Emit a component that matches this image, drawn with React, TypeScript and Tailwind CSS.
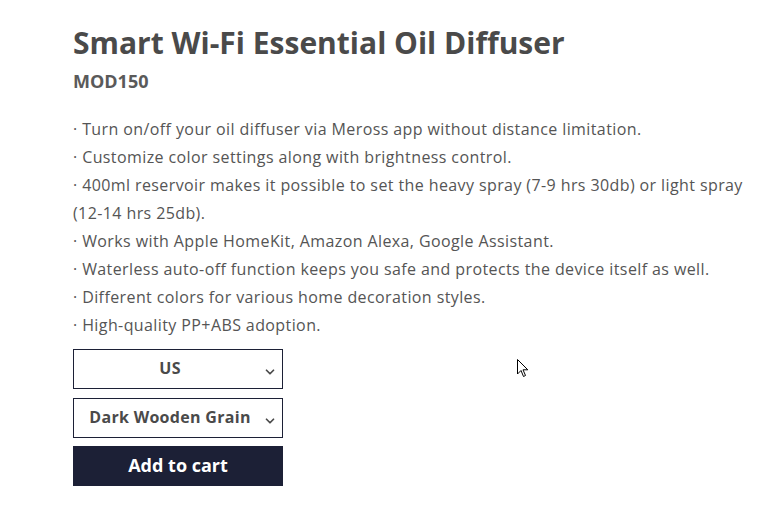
import { ChevronDown } from "lucide-react";

const features = [
  "Turn on/off your oil diffuser via Meross app without distance limitation.",
  "Customize color settings along with brightness control.",
  "400ml reservoir makes it possible to set the heavy spray (7-9 hrs 30db) or light spray",
  "(12-14 hrs 25db).",
  "Works with Apple HomeKit, Amazon Alexa, Google Assistant.",
  "Waterless auto-off function keeps you safe and protects the device itself as well.",
  "Different colors for various home decoration styles.",
  "High-quality PP+ABS adoption.",
];

function SelectBox({ label }: { label: string }) {
  return (
    <div className="relative flex h-10 w-[210px] items-center justify-center border border-[#1c2036] bg-white pb-[3px] pr-4">
      <span className="text-[16px] font-bold tracking-[0.3px] text-[#4a4a4a]">{label}</span>
      <ChevronDown className="absolute right-[5px] top-[15px] h-[14px] w-[14px] text-[#4a4a4a]" strokeWidth={3} />
    </div>
  );
}

export default function App() {
  return (
    <div className="relative min-h-[527px] w-[783px] bg-white font-['Open_Sans',sans-serif]">
      <div className="flex flex-col pl-[73px] pt-[23px]">
        <h1 className="text-[30px] font-bold leading-[40px] text-[#4a4a4a]">
          Smart Wi-Fi Essential Oil Diffuser
        </h1>
        <div className="mt-[6px] text-[18px] font-bold leading-[24px] text-[#5a5a5a]">MOD150</div>

        <ul className="mt-[22px] flex flex-col text-[16px] leading-[28px] tracking-[0.4px] text-[#555555]">
          {features.map((f, i) => (
            <li key={i} className="whitespace-nowrap">
              {f.startsWith("(") ? f : `· ${f}`}
            </li>
          ))}
        </ul>

        <div className="mt-[10px] flex flex-col gap-[9px]">
          <SelectBox label="US" />
          <SelectBox label="Dark Wooden Grain" />
          <button className="-mt-px h-10 w-[210px] bg-[#1c2036] pb-[2px] text-[18px] font-bold text-white">
            Add to cart
          </button>
        </div>
      </div>

      <svg className="absolute left-[517px] top-[359px]" width="12" height="19" viewBox="0 0 12 19">
        <path d="M0.5 0.5 L0.5 15 L4 11.5 L6.5 17.5 L8.5 16.5 L6 10.8 L10.8 10.8 Z" fill="white" stroke="black" strokeWidth="1" />
      </svg>
    </div>
  );
}
